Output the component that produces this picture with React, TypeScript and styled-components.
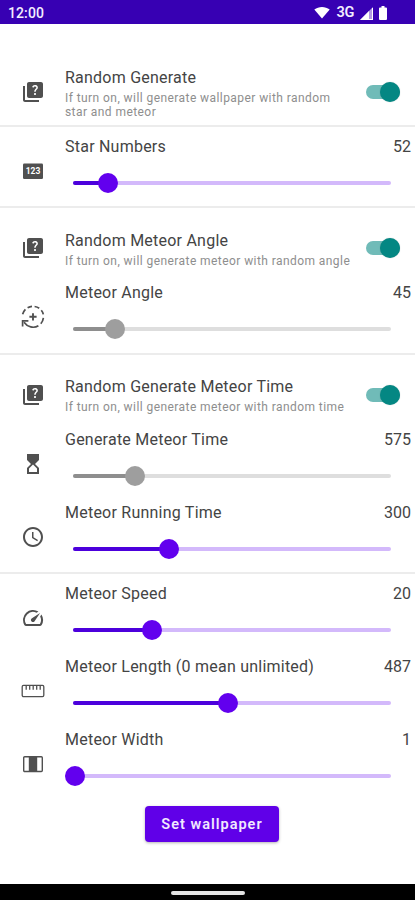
import React from "react";
import styled, { createGlobalStyle } from "styled-components";
import {
  MdHourglassTop,
  MdQuiz,
  MdSchedule,
  MdSpeed,
} from "react-icons/md";

const GlobalStyle = createGlobalStyle`
  * { box-sizing: border-box; }
  body { margin: 0; background: #fff; font-family: Roboto, sans-serif; }
`;

const Screen = styled.div`
  display: flex;
  flex-direction: column;
  width: 415px;
  height: 900px;
  background: #fff;
  overflow: hidden;
`;

const StatusBar = styled.header`
  display: flex;
  align-items: center;
  justify-content: space-between;
  height: 24px;
  padding: 2px 28px 0 8px;
  background: #3700b3;
  color: #f3edff;
`;

const Clock = styled.span`
  font-size: 14px;
  font-weight: 500;
  line-height: 22px;
  letter-spacing: 0.1px;
`;

const StatusIcons = styled.div`
  display: flex;
  align-items: center;
  gap: 6px;
  font-size: 14.5px;
  font-weight: 600;
  line-height: 22px;
  letter-spacing: -0.3px;

  svg { display: block; }
`;

const Section = styled.section<{ $height: number }>`
  height: ${(p) => p.$height}px;
  flex: none;
  border-bottom: 2px solid #ececec;
  &:last-of-type { border-bottom: 0; }
`;

const Row = styled.div`
  display: grid;
  grid-template-columns: 65px 1fr;
`;

const SwitchRow = styled(Row)<{ $height: number; $top: number }>`
  grid-template-columns: 65px 1fr 49px;
  height: ${(p) => p.$height}px;
  padding-top: ${(p) => p.$top}px;
`;

const SliderRow = styled(Row)`
  height: 73px;
  padding-top: 9px;
`;

const IconCell = styled.div<{ $offset: number }>`
  display: flex;
  justify-content: center;
  padding-top: ${(p) => p.$offset}px;
  color: #505050;

  svg { display: block; flex: none; width: 24px; height: 24px; }
`;

const Title = styled.div`
  font-size: 16px;
  line-height: 22px;
  letter-spacing: 0.23px;
  color: #444;
  white-space: nowrap;
`;

const Summary = styled.div`
  margin-top: 2px;
  font-size: 12px;
  line-height: 14px;
  letter-spacing: 0.43px;
  color: #8e8e8e;
  white-space: pre;
`;

const TitleLine = styled.div`
  display: flex;
  justify-content: space-between;
  padding-right: 4px;
`;

const Value = styled(Title)`
  letter-spacing: 0;
`;

const Switch = styled.div<{ $offset: number }>`
  display: flex;
  align-items: center;
  justify-content: flex-end;
  width: 34px;
  height: 14px;
  margin-top: ${(p) => p.$offset}px;
  border-radius: 7px;
  background: #70bbb8;
`;

const SwitchThumb = styled.span`
  width: 20px;
  height: 20px;
  flex: none;
  border-radius: 50%;
  background: #048783;
  box-shadow: 0 0 1px rgba(0, 80, 76, 0.4);
`;

const Track = styled.div<{ $disabled?: boolean }>`
  position: relative;
  width: 318px;
  height: 4px;
  margin: 23px 0 0 8px;
  border-radius: 2px;
  background: ${(p) => (p.$disabled ? "#dedede" : "#d3b9fb")};
`;

const Fill = styled.div<{ $disabled?: boolean }>`
  height: 4px;
  border-radius: 2px;
  background: ${(p) => (p.$disabled ? "#8e8e8e" : "#4c00dc")};
`;

const Thumb = styled.span<{ $disabled?: boolean }>`
  position: absolute;
  top: -8px;
  width: 20px;
  height: 20px;
  margin-left: -10px;
  border-radius: 50%;
  background: ${(p) => (p.$disabled ? "#9e9e9e" : "#6200ee")};
`;

const Actions = styled.div`
  display: flex;
  justify-content: center;
  padding: 7px 0 0 9px;
  flex: 1;
`;

const Button = styled.button`
  width: 134px;
  height: 36px;
  padding: 1px 0 0;
  border: 0;
  border-radius: 4px;
  background: #6000e8;
  box-shadow: 0 1px 3px rgba(0, 0, 0, 0.3);
  color: #f1e8ff;
  font: 600 14.5px/20px Roboto, sans-serif;
  letter-spacing: 1px;
`;

const NavigationBar = styled.footer`
  display: flex;
  align-items: center;
  justify-content: center;
  height: 16px;
  padding-top: 2px;
  background: #000;
`;

const Handle = styled.span`
  width: 74px;
  height: 4px;
  border-radius: 2px;
  background: #e4e4e4;
`;

const NumberLabel = styled.text`
  font: 700 8.5px Roboto, sans-serif;
  fill: #fff;
`;

const NumbersIcon = () => (
  <svg viewBox="0 0 24 24" fill="currentColor">
    <rect x="2" y="4.5" width="20" height="15.5" rx="1.2" />
    <NumberLabel x="12" y="15.2" textAnchor="middle">123</NumberLabel>
  </svg>
);

const AngleIcon = () => (
  <svg viewBox="0 0 24 24" fill="none" stroke="currentColor" strokeWidth="1.7">
    <path d="M1.6 9.2C2.2 7.2 3.1 5.8 4.4 4.4M6.6 2.8C8.2 1.9 9.4 1.5 11 1.4M13.6 1.5C15.7 1.8 17 2.4 18.2 3.3M20.3 5.3C21.4 6.6 22 7.8 22.3 9.4M22.4 12.8C22.1 15.3 21.2 17.1 19.8 18.8M17.4 20.8C12.6 23.6 6.6 22.2 3 17.2" />
    <path d="M1.6 21.4V15.8H7.4" />
    <path d="M12 8.2v7.2M8.4 11.8h7.2" strokeWidth="1.9" />
  </svg>
);

const RulerIcon = () => (
  <svg viewBox="0 0 24 24" fill="none" stroke="currentColor" strokeWidth="1.3">
    <rect x="1.2" y="6.4" width="21.6" height="11.2" rx="1.3" />
    <path d="M5.2 6.8v4M8.7 6.8v4M12.2 6.8v4M15.7 6.8v4M19.2 6.8v4" />
  </svg>
);

const WidthIcon = () => (
  <svg viewBox="0 0 24 24" fill="none" stroke="currentColor" strokeWidth="1.4">
    <rect x="2.7" y="4.7" width="18.6" height="14.8" rx="1" />
    <path d="M7.8 4.2h8.4v15.8H7.8z" fill="currentColor" stroke="none" />
  </svg>
);

const WifiGlyph = () => (
  <svg width="16" height="14" viewBox="0 0 16 14" fill="#fff">
    <path d="M.3 3.6C4.8 0 11.2 0 15.7 3.6L8 12.6z" />
  </svg>
);

const SignalGlyph = () => (
  <svg width="13" height="13" viewBox="0 0 13 13">
    <path d="M13 0v13H0z" fill="#b49ae4" />
    <path d="M9 4v9H0zM12 1h1v12h-1zM9 12h4v1H9z" fill="#fff" />
  </svg>
);

const BatteryGlyph = () => (
  <svg width="8" height="14" viewBox="0 0 8 14" fill="#fff">
    <path d="M2.5 0h3v1.4H7a1 1 0 0 1 1 1V13a1 1 0 0 1-1 1H1a1 1 0 0 1-1-1V2.4a1 1 0 0 1 1-1h1.5z" />
  </svg>
);

type SwitchSettingProps = {
  title: string;
  summary: string;
  height: number;
  top: number;
  iconOffset: number;
};

const SwitchSetting = ({ title, summary, height, top, iconOffset }: SwitchSettingProps) => (
  <SwitchRow $height={height} $top={top}>
    <IconCell $offset={iconOffset}><MdQuiz /></IconCell>
    <div>
      <Title>{title}</Title>
      <Summary>{summary}</Summary>
    </div>
    <Switch $offset={iconOffset + 5}><SwitchThumb /></Switch>
  </SwitchRow>
);

type SliderSettingProps = {
  icon: React.ReactNode;
  title: string;
  value: number;
  position: number;
  disabled?: boolean;
};

const SliderSetting = ({ icon, title, value, position, disabled }: SliderSettingProps) => (
  <SliderRow>
    <IconCell $offset={23}>{icon}</IconCell>
    <div>
      <TitleLine>
        <Title>{title}</Title>
        <Value>{value}</Value>
      </TitleLine>
      <Track $disabled={disabled}>
        <Fill $disabled={disabled} style={{ width: position }} />
        <Thumb $disabled={disabled} style={{ left: position }} />
      </Track>
    </div>
  </SliderRow>
);

export default function App() {
  return (
    <>
      <GlobalStyle />
      <Screen>
        <StatusBar>
          <Clock>12:00</Clock>
          <StatusIcons>
            <WifiGlyph />
            <span>3G</span>
            <SignalGlyph />
            <BatteryGlyph />
          </StatusIcons>
        </StatusBar>
        <Section $height={103}>
          <SwitchSetting
            title="Random Generate"
            summary={"If turn on, will generate wallpaper with random\nstar and meteor"}
            height={101}
            top={43}
            iconOffset={13}
          />
        </Section>
        <Section $height={81}>
          <SliderSetting icon={<NumbersIcon />} title="Star Numbers" value={52} position={34.5} />
        </Section>
        <Section $height={147}>
          <SwitchSetting
            title="Random Meteor Angle"
            summary="If turn on, will generate meteor with random angle"
            height={65}
            top={22}
            iconOffset={6}
          />
          <SliderSetting icon={<AngleIcon />} title="Meteor Angle" value={45} position={42} disabled />
        </Section>
        <Section $height={219}>
          <SwitchSetting
            title="Random Generate Meteor Time"
            summary="If turn on, will generate meteor with random time"
            height={65}
            top={21}
            iconOffset={7}
          />
          <SliderSetting icon={<MdHourglassTop />} title="Generate Meteor Time" value={575} position={62} disabled />
          <SliderSetting icon={<MdSchedule />} title="Meteor Running Time" value={300} position={96} />
        </Section>
        <Section $height={225}>
          <SliderSetting icon={<MdSpeed />} title="Meteor Speed" value={20} position={78.5} />
          <SliderSetting icon={<RulerIcon />} title="Meteor Length (0 mean unlimited)" value={487} position={155} />
          <SliderSetting icon={<WidthIcon />} title="Meteor Width" value={1} position={2} />
        </Section>
        <Actions>
          <Button>Set wallpaper</Button>
        </Actions>
        <NavigationBar>
          <Handle />
        </NavigationBar>
      </Screen>
    </>
  );
}
